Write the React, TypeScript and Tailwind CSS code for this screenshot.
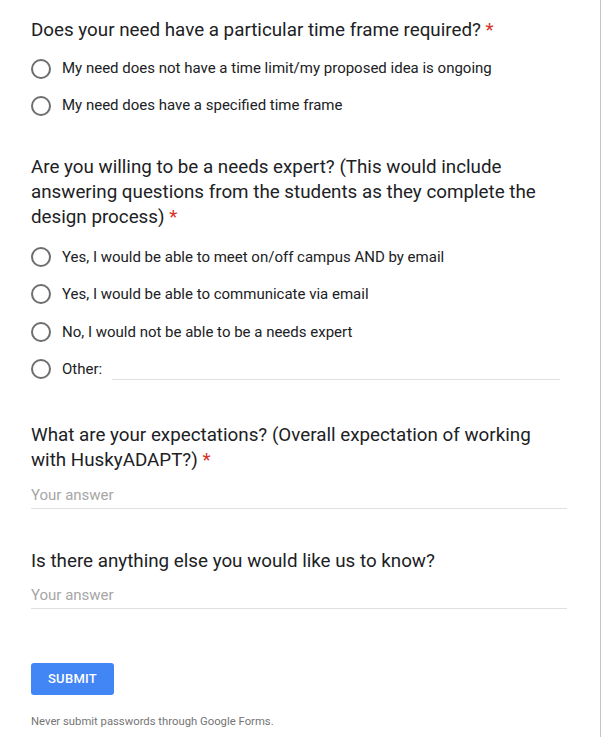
import React from "react"

type Opt = { label: string; other?: boolean }

const section2: Opt[] = [
  { label: "Yes, I would be able to meet on/off campus AND by email" },
  { label: "Yes, I would be able to communicate via email" },
  { label: "No, I would not be able to be a needs expert" },
  { label: "Other:", other: true },
]

function Radio() {
  return <div className="w-[20px] h-[20px] rounded-full border-2 border-[#6e6e6e] shrink-0" />
}

function Title({ children, className = "" }: { children: React.ReactNode; className?: string }) {
  return (
    <div className={`w-[536px] text-[18.8px] leading-[25px] text-[#202124] ${className}`}>
      {children} <span className="text-[#d93025]">*</span>
    </div>
  )
}

function RadioRow({ opt, h }: { opt: Opt; h: string }) {
  return (
    <div className={`flex items-center ${h}`}>
      <Radio />
      <span className="ml-[11px] text-[15px] text-[#202124]">{opt.label}</span>
      {opt.other && <div className="ml-auto mr-[40px] w-[448px] h-[21px] border-b border-[#e0e0e0]" />}
    </div>
  )
}

function AnswerField({ className = "" }: { className?: string }) {
  return (
    <div className={`w-[536px] text-[15px] leading-[20px] pb-[3px] text-[#a6a6a6] border-b border-[#e0e0e0] ${className}`}>
      Your answer
    </div>
  )
}

export default function App() {
  return (
    <div className="w-[601px] min-h-[737px] bg-white border-r border-[#c6c4d2] font-['Roboto',sans-serif] pl-[31px] pt-[18px]">
      <Title>Does your need have a particular time frame required?</Title>
      <div className="mt-[7px] w-[569px]">
        <RadioRow opt={{ label: "My need does not have a time limit/my proposed idea is ongoing" }} h="h-[37px]" />
        <RadioRow opt={{ label: "My need does have a specified time frame" }} h="h-[37px]" />
      </div>

      <Title className="mt-[31px]">
        Are you willing to be a needs expert? (This would include answering questions from the students as they complete the design process)
      </Title>
      <div className="mt-[8px] w-[569px]">
        {section2.map((o, i) => (
          <RadioRow key={i} opt={o} h="h-[37.5px]" />
        ))}
      </div>

      <Title className="mt-[35px]">
        What are your expectations? (Overall expectation of working with HuskyADAPT?)
      </Title>
      <AnswerField className="mt-[12px]" />

      <div className="mt-[40px] text-[18.8px] leading-[25px] text-[#202124]">
        Is there anything else you would like us to know?
      </div>
      <AnswerField className="mt-[11px]" />

      <button className="mt-[54px] h-[32px] w-[83px] rounded-[3px] bg-[#4285f4] text-white text-[13px] font-medium tracking-[0.3px] flex items-center justify-center">
        SUBMIT
      </button>

      <div className="mt-[19px] text-[11.3px] leading-[16px] text-[#757575]">
        Never submit passwords through Google Forms.
      </div>
    </div>
  )
}
